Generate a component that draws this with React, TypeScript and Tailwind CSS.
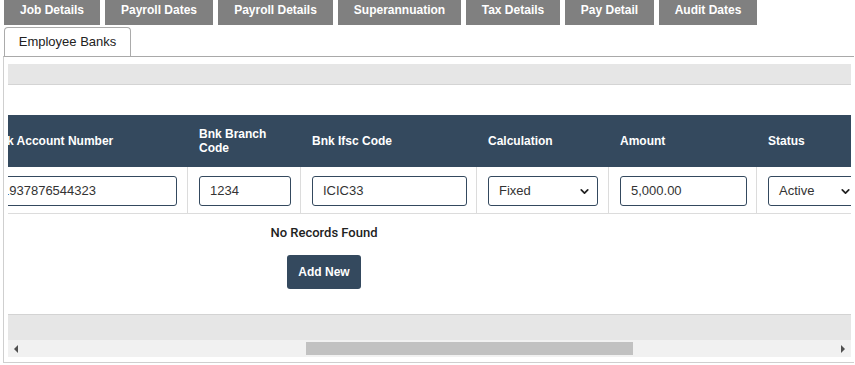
import { ChevronDown } from "lucide-react";

const tabs = [
  { label: "Job Details", w: "w-[96px]" },
  { label: "Payroll Dates", w: "w-[108px]" },
  { label: "Payroll Details", w: "w-[115px]" },
  { label: "Superannuation", w: "w-[123px]" },
  { label: "Tax Details", w: "w-[94px]" },
  { label: "Pay Detail", w: "w-[89px]" },
  { label: "Audit Dates", w: "w-[98px]" },
];

const TextBox = ({ value, width }: { value: string; width: string }) => (
  <div
    className={`${width} h-[30px] flex items-center px-[10px] border border-[#34495e] rounded-[3px] text-[13px] text-[#333] whitespace-nowrap overflow-hidden`}
  >
    {value}
  </div>
);

const SelectBox = ({ value, width }: { value: string; width: string }) => (
  <div
    className={`${width} h-[30px] flex items-center justify-between pl-[10px] pr-[6px] border border-[#34495e] rounded-[3px] text-[13px] text-[#333] shrink-0`}
  >
    <span>{value}</span>
    <ChevronDown size={13} strokeWidth={3.2} className="text-[#222]" />
  </div>
);

export default function App() {
  return (
    <div className="w-[855px] h-[365px] bg-white overflow-hidden font-['Liberation_Sans',Arial,sans-serif]">
      {/* top tabs */}
      <div className="flex gap-[5px] pl-[4px] h-[25px]">
        {tabs.map((t) => (
          <div
            key={t.label}
            className={`${t.w} h-full bg-[#808080] text-white text-[12px] font-bold flex items-center justify-center pb-[5px]`}
          >
            {t.label}
          </div>
        ))}
      </div>
      <div className="pl-[4px] mt-[2px]">
        <div className="w-[127px] h-[29px] border border-b-0 border-[#ababab] rounded-t-[4px] bg-white flex items-center justify-center text-[13px] text-[#222]">
          Employee Banks
        </div>
      </div>

      {/* panel */}
      <div className="ml-[3px] w-[851px] h-[307px] border-t border-t-[#a9a9a9] border-l border-b border-l-[#cfcfcf] border-b-[#cfcfcf] pl-[4px] pr-[3px]">
        <div className="mt-[7px] h-[21px] bg-[#e6e6e6] border-b border-[#d4d4d4]" />

        <div className="mt-[30px] w-full overflow-hidden">
          <div className="-ml-[28px] w-[900px]">
            {/* header */}
            <div className="flex h-[52px] bg-[#34495e] text-white text-[12px] font-bold leading-[14px]">
              <div className="w-[208px] px-[11px] flex items-center">Bnk Account Number</div>
              <div className="w-[113px] px-[11px] flex items-center">Bnk Branch Code</div>
              <div className="w-[176px] px-[11px] flex items-center">Bnk Ifsc Code</div>
              <div className="w-[132px] px-[11px] flex items-center">Calculation</div>
              <div className="w-[148px] px-[11px] flex items-center">Amount</div>
              <div className="w-[123px] px-[11px] flex items-center">Status</div>
            </div>
            {/* row */}
            <div className="flex h-[47px] border-b border-[#dcdcdc]">
              <div className="w-[208px] px-[11px] pt-[9px] border-r border-[#dcdcdc]">
                <TextBox value="1937876544323" width="w-[186px]" />
              </div>
              <div className="w-[113px] px-[11px] pt-[9px] border-r border-[#dcdcdc]">
                <TextBox value="1234" width="w-[92px]" />
              </div>
              <div className="w-[176px] px-[11px] pt-[9px] border-r border-[#dcdcdc]">
                <TextBox value="ICIC33" width="w-[155px]" />
              </div>
              <div className="w-[132px] px-[11px] pt-[9px] border-r border-[#dcdcdc]">
                <SelectBox value="Fixed" width="w-[110px]" />
              </div>
              <div className="w-[148px] px-[11px] pt-[9px] border-r border-[#dcdcdc]">
                <TextBox value="5,000.00" width="w-[127px]" />
              </div>
              <div className="w-[123px] px-[11px] pt-[9px]">
                <SelectBox value="Active" width="w-[91px]" />
              </div>
            </div>
          </div>
        </div>

        {/* empty state */}
        <div className="w-[632px] flex flex-col items-center">
          <div className="mt-[11px] leading-[16px] text-[13px] font-medium text-[#222] font-['Roboto',sans-serif]">
            No Records Found
          </div>
          <button className="mt-[14px] w-[74px] h-[34px] rounded-[3px] bg-[#34495e] text-white text-[12px] font-bold">
            Add New
          </button>
        </div>

        {/* footer bar + scrollbar */}
        <div className="mt-[25px] h-[26px] bg-[#e6e6e6] border-t border-[#d3d3d3]" />
        <div className="h-[17px] bg-[#f1f1f1] flex items-center">
          <div className="w-[17px] flex justify-center">
            <svg width="5" height="8" viewBox="0 0 5 8">
              <path d="M4 0 L0 4 L4 8 Z" fill="#505050" />
            </svg>
          </div>
          <div className="flex-1 h-full flex items-center">
            <div className="ml-[281px] w-[327px] h-[13px] bg-[#c1c1c1]" />
          </div>
          <div className="w-[17px] flex justify-center">
            <svg width="5" height="8" viewBox="0 0 5 8">
              <path d="M1 0 L5 4 L1 8 Z" fill="#505050" />
            </svg>
          </div>
        </div>
      </div>
    </div>
  );
}
